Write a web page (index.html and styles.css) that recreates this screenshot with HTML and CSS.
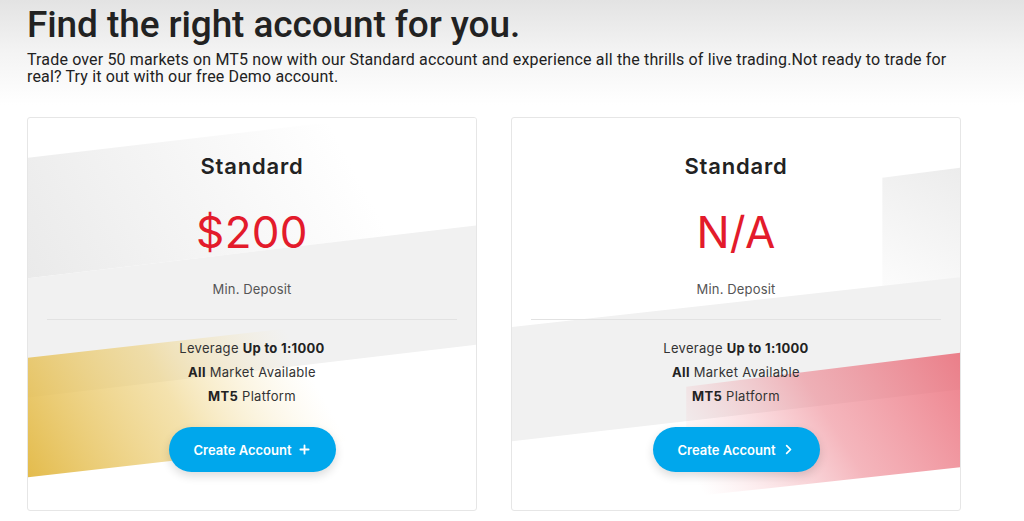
FILE: index.html
```html
<!DOCTYPE html>
<html lang="en">
<head>
<meta charset="utf-8">
<title>Find the right account for you.</title>
<link rel="stylesheet" href="styles.css">
</head>
<body>
<header class="intro">
  <h1 class="intro-title">Find the right account for you.</h1>
  <p class="intro-text">Trade over 50 markets on MT5 now with our Standard account and experience all the thrills of live trading.Not ready to trade for real? Try it out with our free Demo account.</p>
</header>
<main class="cards">
  <section class="card">
    <svg class="card-bg" viewBox="0 0 450 394" preserveAspectRatio="none" aria-hidden="true">
      <defs>
        <linearGradient id="ga" x1="0" y1="161" x2="300" y2="0" gradientUnits="userSpaceOnUse">
          <stop offset="0" stop-color="#eaeaea"/>
          <stop offset="1" stop-color="#ffffff"/>
        </linearGradient>
        <linearGradient id="gold" x1="0" y1="361" x2="260" y2="215" gradientUnits="userSpaceOnUse">
          <stop offset="0" stop-color="#e2b843" stop-opacity="0.95"/>
          <stop offset="0.55" stop-color="#edcf78" stop-opacity="0.6"/>
          <stop offset="1" stop-color="#f7e7b5" stop-opacity="0"/>
        </linearGradient>
      </defs>
      <polygon points="0,40 450,-13 450,108 0,161" fill="url(#ga)"/>
      <polygon points="0,161 450,108 450,228 0,281" fill="#f1f1f1"/>
      <polygon points="0,241 450,190 450,310 0,361" fill="url(#gold)"/>
    </svg>
    <h2 class="card-title">Standard</h2>
    <div class="card-price">$200</div>
    <div class="card-label">Min. Deposit</div>
    <hr class="card-divider">
    <ul class="card-features">
      <li>Leverage <b>Up to 1:1000</b></li>
      <li><b>All</b> Market Available</li>
      <li><b>MT5</b> Platform</li>
    </ul>
    <a class="card-btn" href="#">Create Account
      <svg class="btn-icon" viewBox="0 0 12 12" aria-hidden="true"><path d="M6 1.5v9M1.5 6h9" stroke="#fff" stroke-width="2" stroke-linecap="round"/></svg>
    </a>
  </section>
  <section class="card">
    <svg class="card-bg" viewBox="0 0 450 394" preserveAspectRatio="none" aria-hidden="true">
      <defs>
        <linearGradient id="gt" x1="450" y1="50" x2="372" y2="200" gradientUnits="userSpaceOnUse">
          <stop offset="0" stop-color="#ececec"/>
          <stop offset="1" stop-color="#ffffff"/>
        </linearGradient>
        <linearGradient id="red" x1="450" y1="236" x2="200" y2="390" gradientUnits="userSpaceOnUse">
          <stop offset="0" stop-color="#e9626f" stop-opacity="0.8"/>
          <stop offset="0.5" stop-color="#ec7a86" stop-opacity="0.55"/>
          <stop offset="1" stop-color="#f3a9b1" stop-opacity="0"/>
        </linearGradient>
      </defs>
      <polygon points="372,60 450,50 450,160 372,215" fill="url(#gt)"/>
      <polygon points="0,210 450,160 450,273 0,325" fill="#f1f1f1"/>
      <polygon points="175,270 450,236 450,351 222,376 175,381" fill="url(#red)"/>
    </svg>
    <h2 class="card-title">Standard</h2>
    <div class="card-price">N/A</div>
    <div class="card-label">Min. Deposit</div>
    <hr class="card-divider">
    <ul class="card-features">
      <li>Leverage <b>Up to 1:1000</b></li>
      <li><b>All</b> Market Available</li>
      <li><b>MT5</b> Platform</li>
    </ul>
    <a class="card-btn" href="#">Create Account
      <svg class="btn-icon" viewBox="0 0 12 12" aria-hidden="true"><path d="M4 1.8L8.2 6 4 10.2" fill="none" stroke="#fff" stroke-width="1.9" stroke-linecap="round" stroke-linejoin="round"/></svg>
    </a>
  </section>
</main>
</body>
</html>
```

FILE: styles.css
```css
* { box-sizing: border-box; }
html, body { margin: 0; padding: 0; }
body {
  width: 1024px;
  height: 521px;
  overflow: hidden;
  font-family: Inter, "Noto Sans", sans-serif;
  color: #222;
  background: linear-gradient(180deg, #e3e3e3 0px, #f3f3f3 50px, #ffffff 105px, #ffffff 100%);
}
.intro {
  padding: 7px 0 0 27px;
}
.intro-title {
  margin: 0;
  font-family: Roboto, "Liberation Sans", sans-serif;
  font-weight: 500;
  font-size: 37px;
  line-height: 36px;
  letter-spacing: -0.1px;
  color: #222;
}
.intro-text {
  margin: 8px 0 0;
  width: 945px;
  font-family: Roboto, "Liberation Sans", sans-serif;
  font-size: 16px;
  line-height: 17px;
  letter-spacing: 0.15px;
  color: #222;
}
.cards {
  display: flex;
  gap: 34px;
  padding: 0 0 0 27px;
  margin-top: 32px;
}
.card {
  position: relative;
  width: 450px;
  height: 394px;
  border: 1px solid #e6e6e6;
  border-radius: 3px;
  background: #fff;
  overflow: hidden;
  display: flex;
  flex-direction: column;
  align-items: center;
  padding-top: 34px;
}
.card-bg {
  position: absolute;
  left: 0;
  top: 0;
  width: 100%;
  height: 100%;
  z-index: 0;
}
.card > *:not(.card-bg) { position: relative; z-index: 1; }
.card-title {
  margin: 0;
  font-size: 22px;
  line-height: 28px;
  font-weight: 600;
  letter-spacing: 0.8px;
  color: #222;
}
.card-price {
  margin-top: 26px;
  font-size: 44px;
  line-height: 52px;
  font-weight: 400;
  letter-spacing: 0.3px;
  color: #e31b2b;
}
.card-label {
  margin-top: 22px;
  font-size: 13px;
  line-height: 18px;
  letter-spacing: 0.15px;
  color: #555;
}
.card-divider {
  align-self: stretch;
  margin: 21px 19px 0;
  border: 0;
  border-top: 1px solid #e2e2e2;
  height: 0;
}
.card-features {
  list-style: none;
  margin: 16px 0 0;
  padding: 0;
  text-align: center;
  font-size: 13px;
  line-height: 24px;
  letter-spacing: 0.3px;
  color: #333;
}
.card-features b { font-weight: 700; color: #222; }
.card-btn {
  margin-top: 19px;
  width: 167px;
  height: 45px;
  border-radius: 23px;
  background: #00a7ec;
  color: #fff;
  text-decoration: none;
  font-size: 13px;
  font-weight: 600;
  display: flex;
  align-items: center;
  justify-content: center;
  gap: 8px;
  box-shadow: 0 4px 10px rgba(0, 0, 0, 0.14);
}
.btn-icon { width: 11px; height: 11px; }
```
